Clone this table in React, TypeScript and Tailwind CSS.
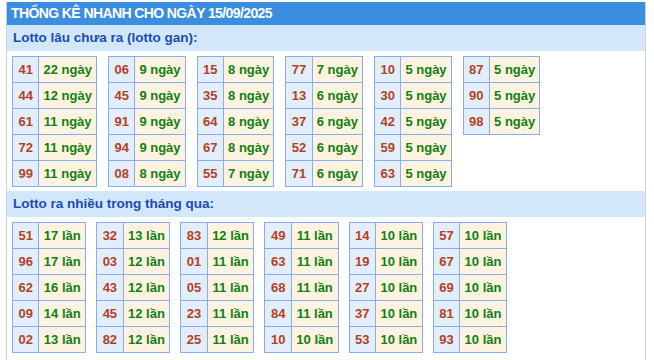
type Row = [string, number];

const gan: Row[][] = [
  [["41", 22], ["44", 12], ["61", 11], ["72", 11], ["99", 11]],
  [["06", 9], ["45", 9], ["91", 9], ["94", 9], ["08", 8]],
  [["15", 8], ["35", 8], ["64", 8], ["67", 8], ["55", 7]],
  [["77", 7], ["13", 6], ["37", 6], ["52", 6], ["71", 6]],
  [["10", 5], ["30", 5], ["42", 5], ["59", 5], ["63", 5]],
  [["87", 5], ["90", 5], ["98", 5]],
];

const nhieu: Row[][] = [
  [["51", 17], ["96", 17], ["62", 16], ["09", 14], ["02", 13]],
  [["32", 13], ["03", 12], ["43", 12], ["45", 12], ["82", 12]],
  [["83", 12], ["01", 11], ["05", 11], ["23", 11], ["25", 11]],
  [["49", 11], ["63", 11], ["68", 11], ["84", 11], ["10", 10]],
  [["14", 10], ["19", 10], ["27", 10], ["37", 10], ["53", 10]],
  [["57", 10], ["67", 10], ["69", 10], ["81", 10], ["93", 10]],
];

const StatTable = ({ rows, unit, valuePad }: { rows: Row[]; unit: string; valuePad: string }) => (
  <table className="border-collapse border border-[#86acf2] text-[13px] font-bold leading-none">
    <tbody>
      {rows.map(([num, count]) => (
        <tr key={num} className="h-[26px]">
          <td className="border border-[#86acf2] bg-[#e2eefc] px-[5.5px] text-center text-[#b4411e]">
            {num}
          </td>
          <td className={`border border-[#86acf2] bg-[#fef3e1] text-center text-[#108010] ${valuePad}`}>
            {count} {unit}
          </td>
        </tr>
      ))}
    </tbody>
  </table>
);

const SectionTitle = ({ children }: { children: string }) => (
  <div className="flex h-[26px] items-center bg-[#d3e7fb] pl-[6px] text-[13.5px] font-bold text-[#1a4db0]">
    {children}
  </div>
);

export default function App() {
  return (
    <div className="min-h-[360px] bg-white pt-[2px] font-['Liberation_Sans',Arial,sans-serif]">
      <div className="ml-[6px] w-[640px] border-x border-[#c6d3e2] pb-2">
        <div className="flex h-[23px] items-center bg-[#3a8ddf] pl-[4px] text-[14px] font-bold tracking-[-0.6px] text-white">
          THỐNG KÊ NHANH CHO NGÀY 15/09/2025
        </div>

        <SectionTitle>Lotto lâu chưa ra (lotto gan):</SectionTitle>
        <div className="flex items-start gap-x-[11px] px-[5px] pb-[4px] pt-[5px]">
          {gan.map((rows, i) => (
            <StatTable key={i} rows={rows} unit="ngày" valuePad="px-[4px]" />
          ))}
        </div>

        <SectionTitle>Lotto ra nhiều trong tháng qua:</SectionTitle>
        <div className="flex items-start gap-x-[10px] px-[5px] pt-[5px]">
          {nhieu.map((rows, i) => (
            <StatTable key={i} rows={rows} unit="lần" valuePad="px-[4.4px]" />
          ))}
        </div>
      </div>
    </div>
  );
}
